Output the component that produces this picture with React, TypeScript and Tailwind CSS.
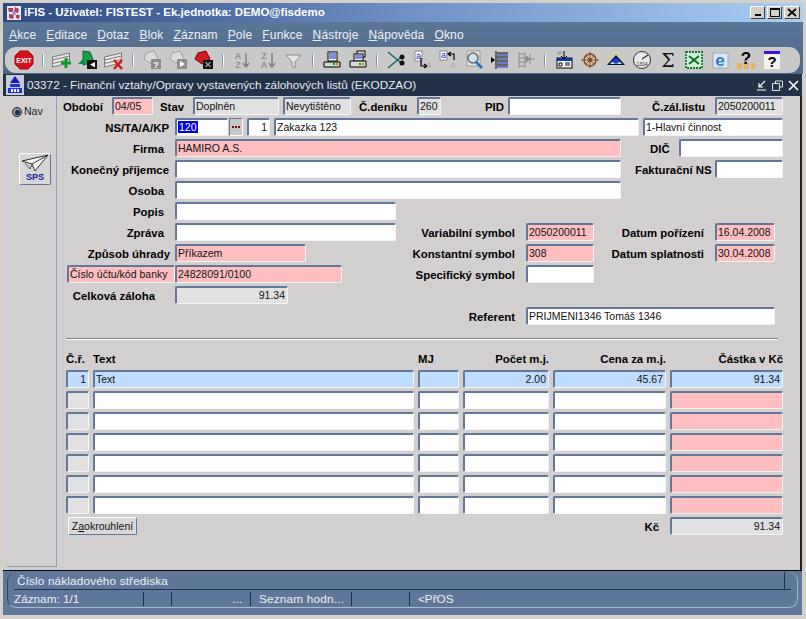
import type { ReactNode } from "react";

const TONES = {
  white: "bg-white",
  pink: "bg-[#ffbfc1]",
  gray: "bg-[#e2e1e2]",
  blue: "bg-[#bfdeff]",
};

type Tone = keyof typeof TONES;

function Field({ w, tone = "white", right, children }: { w: string; tone?: Tone; right?: boolean; children?: ReactNode }) {
  return (
    <div className={`${w} ${TONES[tone]} h-[18px] shrink-0 overflow-hidden whitespace-nowrap rounded-[2px] border-2 border-r border-b border-t-[#62789a] border-l-[#62789a] border-r-[#f4f4f4] border-b-[#f4f4f4] text-[10.5px] leading-[14px] text-[#111] ${right ? "pr-[2px] text-right" : "pl-[1px]"}`}>
      {children}
    </div>
  );
}

function Lbl({ w, right, children }: { w: string; right?: boolean; children: ReactNode }) {
  return (
    <div className={`${w} ${right ? "text-right" : ""} shrink-0 whitespace-nowrap text-[11.4px] leading-[20px] font-bold text-black`}>
      {children}
    </div>
  );
}

function Row({ children }: { children: ReactNode }) {
  return <div className="flex h-[18px] items-start">{children}</div>;
}

function Ico({ children }: { children: ReactNode }) {
  return (
    <div className="flex h-[24px] w-[26px] shrink-0 items-center justify-center">
      <svg viewBox="0 0 20 20" className="h-[20px] w-[20px]">{children}</svg>
    </div>
  );
}

const Sep = () => (
  <div className="flex h-[24px] w-[12px] shrink-0 items-center justify-center">
    <div className="h-[13px] w-[2px] bg-[#7f9ab8] border-r border-white" />
  </div>
);

const RecLines = ({ c = "#777" }: { c?: string }) => (
  <g stroke={c} fill="#e8e8e8">
    <path d="M0.500 7l17-4v10l-17 4z" />
    <path d="M0.500 10l17-4M0.500 13.500l17-4" fill="none" />
  </g>
);

const Doc = ({ c = "#a0a0a0" }: { c?: string }) => (
  <path d="M4 3l8-2 4 8-8 4-6-4z" fill="#dcdcdc" stroke={c} />
);

const MENU: [string, string][] = [
  ["A", "kce"], ["E", "ditace"], ["D", "otaz"], ["B", "lok"], ["Z", "áznam"],
  ["P", "ole"], ["F", "unkce"], ["N", "ástroje"], ["N", "ápověda"], ["O", "kno"],
];

const TABLE_ROWS = [0, 1, 2, 3, 4, 5];

export default function App() {
  return (
    <div className="relative flex h-[619px] w-[806px] flex-col overflow-hidden bg-[#d4d0c8] font-['Liberation_Sans',Arial,sans-serif]">
      {/* titulek aplikace */}
      <div className="mx-[3px] mt-[3px] flex h-[19px] shrink-0 items-center bg-linear-to-r from-[#2c4a82] via-[#6e90c4] to-[#a9cff4] pl-[3px] pr-[3px]">
        <svg viewBox="0 0 16 16" className="h-[16px] w-[16px] shrink-0">
          <rect x="1" y="1" width="14" height="14" fill="#f2e6ea" />
          <path d="M2 3h5v4H3zM9 2l4 2-1 4-4-1zM3 9l5 1-1 4-4-1zM10 10l4 0-1 4-3-1z" fill="#b23a5e" />
          <path d="M5 5l6 6M11 4l-6 7" stroke="#5a5fb0" />
        </svg>
        <span className="ml-[2px] text-[11.500px] leading-none font-bold whitespace-nowrap text-white">iFIS - Uživatel: FISTEST - Ek.jednotka: DEMO@fisdemo</span>
        <div className="ml-auto flex items-center">
          <div className="flex h-[13px] w-[15px] items-end justify-center border border-t-white border-l-white border-r-[#404040] border-b-[#404040] bg-[#d4d0c8] pb-[2px]">
            <div className="h-[2px] w-[6px] bg-black" />
          </div>
          <div className="ml-[2px] flex h-[13px] w-[15px] items-center justify-center border border-t-white border-l-white border-r-[#404040] border-b-[#404040] bg-[#d4d0c8]">
            <div className="h-[9px] w-[10px] border border-t-2 border-black" />
          </div>
          <div className="ml-[2px] flex h-[13px] w-[16px] items-center justify-center border border-t-white border-l-white border-r-[#404040] border-b-[#404040] bg-[#d4d0c8]">
            <svg viewBox="0 0 10 9" className="h-[9px] w-[10px]"><path d="M1 1l8 7M9 1l-8 7" stroke="#000" strokeWidth="1.700" /></svg>
          </div>
        </div>
      </div>

      {/* menu a nástrojová lišta */}
      <div className="mx-[3px] flex h-[52px] shrink-0 flex-col bg-linear-to-b from-[#5c7698] to-[#4f688a]">
        <div className="flex h-[25px] items-center gap-[10px] pl-[6px] text-[12px] tracking-[0.15px] text-[#eef2f7]">
          {MENU.map(([a, b], i) => (
            <span key={i}><span className="underline">{a}</span>{b}</span>
          ))}
        </div>
        <div className="ml-[2px] mr-[3px] flex h-[26px] items-center rounded-[11px] bg-[#c9c9ca] pl-[6px]">
          <Ico>
            <path d="M6 1h8l5 5v8l-5 5H6l-5-5V6z" fill="#d8101c" stroke="#900" />
            <text x="10" y="13" textAnchor="middle" fontSize="7" fontWeight="700" fill="#fff">EXIT</text>
          </Ico>
          <Sep />
          <Ico><RecLines /><path d="M14 8v10M9 13h10" stroke="#0a9a2a" strokeWidth="2.800" /></Ico>
          <Ico>
            <path d="M5 1l7 1 4 10-11 3z" fill="#15a040" stroke="#064" />
            <path d="M0 14l6-6v6z" fill="#085" />
            <rect x="9" y="10" width="10" height="9" fill="#111" /><path d="M17 12l-5 2.500 5 3z" fill="#fff" />
          </Ico>
          <Ico><RecLines /><path d="M10 10l8 9M18 10l-8 9" stroke="#d81818" strokeWidth="2.400" /></Ico>
          <Sep />
          <Ico><Doc /><rect x="9" y="9" width="10" height="10" fill="#8c8c8c" /><text x="14" y="18" textAnchor="middle" fontSize="9" fontWeight="700" fill="#fff">?</text></Ico>
          <Ico><Doc /><rect x="9" y="9" width="10" height="10" fill="#8c8c8c" /><path d="M12 11l5 3-5 3z" fill="#fff" /></Ico>
          <Ico>
            <path d="M4 3l8-2 4 8-8 5-7-5z" fill="#d81820" stroke="#700" />
            <rect x="9" y="10" width="10" height="9" fill="#111" /><path d="M11.500 12l5 5M16.500 12l-5 5" stroke="#fff" />
          </Ico>
          <Sep />
          <Ico>
            <text x="6" y="9" textAnchor="middle" fontSize="9" fontWeight="700" fill="#909090">A</text>
            <text x="6" y="18" textAnchor="middle" fontSize="9" fontWeight="700" fill="#909090">Z</text>
            <path d="M14 3v13M11 13l3 4 3-4" stroke="#808080" strokeWidth="1.500" fill="none" />
          </Ico>
          <Ico>
            <text x="6" y="9" textAnchor="middle" fontSize="9" fontWeight="700" fill="#909090">Z</text>
            <text x="6" y="18" textAnchor="middle" fontSize="9" fontWeight="700" fill="#909090">A</text>
            <path d="M14 3v13M11 13l3 4 3-4" stroke="#808080" strokeWidth="1.500" fill="none" />
          </Ico>
          <Ico><path d="M2 5h15l-6 7v6l-3-2v-4z" fill="#e6e6e6" stroke="#8a8a8a" /></Ico>
          <Sep />
          <Ico>
            <rect x="6" y="2" width="9" height="9" fill="#fff" stroke="#000" />
            <path d="M7 4h7M7 6h7M7 8h7" stroke="#0018c0" />
            <path d="M2 12h16v5H2z" fill="#d8d8d8" stroke="#000" />
            <path d="M11 14h2" stroke="#0a0" strokeWidth="2" /><path d="M14 14h2" stroke="#d80" strokeWidth="2" />
          </Ico>
          <Ico>
            <rect x="9" y="1" width="8" height="6" fill="#ddd" stroke="#000" />
            <rect x="6" y="4" width="9" height="7" fill="#fff" stroke="#000" />
            <path d="M7 6h7M7 8h7" stroke="#0018c0" />
            <path d="M2 11h16v6H2z" fill="#d8d8d8" stroke="#000" />
            <path d="M11 14h2" stroke="#0a0" strokeWidth="2" /><path d="M14 14h2" stroke="#d80" strokeWidth="2" />
          </Ico>
          <Sep />
          <Ico>
            <path d="M2 2l12 10M2 18l12-10" stroke="#1c6a70" strokeWidth="1.600" fill="none" />
            <circle cx="16" cy="13" r="2.500" fill="#111" /><circle cx="16" cy="7" r="2.500" fill="#111" />
          </Ico>
          <Ico>
            <path d="M3 1h7v10H3z" fill="#fff" stroke="#888" />
            <text x="6.500" y="9" textAnchor="middle" fontSize="9" fill="#1020d0">a</text>
            <path d="M9 8v8h5M12 14l3 2-3 2" stroke="#000" strokeWidth="1.200" fill="none" />
            <text x="17" y="18" textAnchor="middle" fontSize="9" fill="#aaa">a</text>
          </Ico>
          <Ico>
            <path d="M2 1h7v9H2z" fill="#fff" stroke="#888" />
            <text x="5.500" y="8" textAnchor="middle" fontSize="9" fill="#1020d0">a</text>
            <path d="M16 10V4h-5M13 2l-3 2 3 2" stroke="#000" strokeWidth="1.200" fill="none" />
            <text x="15" y="18" textAnchor="middle" fontSize="9" fill="#aaa">a</text>
          </Ico>
          <Ico>
            <path d="M3 1h13v15H3z" fill="#e6e6e6" stroke="#999" />
            <circle cx="9" cy="8" r="5" fill="#cfe4ea" stroke="#666" strokeWidth="1.500" />
            <path d="M12 12l6 6" stroke="#2070c8" strokeWidth="2.500" />
          </Ico>
          <Ico>
            <path d="M6 1v18" stroke="#000" />
            <path d="M7 3h11M7 7h11M7 11h11M7 15h11" stroke="#000" />
            <path d="M7 5h11M7 9h11M7 13h11M7 17h11" stroke="#0a30d0" />
            <path d="M1 7l4 3-4 3z" fill="#000" />
          </Ico>
          <Ico>
            <path d="M3 2v16M9 2v16" stroke="#8c8c8c" />
            <path d="M3 4h6M3 8h6M3 12h6M3 16h6" stroke="#8c8c8c" />
            <path d="M10 6l4 3-4 3zM14 9h5M14 4v10" fill="#8c8c8c" stroke="#8c8c8c" />
          </Ico>
          <Sep />
          <Ico>
            <rect x="3" y="8" width="15" height="10" fill="#fff" stroke="#000" />
            <rect x="3" y="8" width="15" height="3" fill="#0a3ab0" />
            <path d="M5 13h3v3H5zM11 13h5M11 15h5" stroke="#000" fill="none" />
            <path d="M10 1v7M7 6l3 3 3-3" stroke="#000" fill="none" />
            <path d="M3 2h5M3 4h4" stroke="#888" />
          </Ico>
          <Ico>
            <circle cx="10" cy="10" r="6" fill="none" stroke="#8a4a10" strokeWidth="1.500" />
            <circle cx="10" cy="10" r="2" fill="#8a4a10" />
            <path d="M1 10h18M10 2v16M5 5l10 10M15 5L5 15" stroke="#8a4a10" />
          </Ico>
          <Ico>
            <path d="M10 5l9 10H1z" fill="#0a1a30" />
            <path d="M1 4l3 3M19 4l-3 3M10 1v3" stroke="#e8e020" />
            <path d="M4 14a7 6 0 0 1 12 0z" fill="#c8d8e8" />
            <circle cx="10" cy="11" r="2.800" fill="#1040e0" />
          </Ico>
          <Ico>
            <circle cx="10" cy="10" r="8.500" fill="#e8e8e8" stroke="#333" />
            <path d="M10 9l6-4" stroke="#333" strokeWidth="1.200" />
            <text x="10" y="16" textAnchor="middle" fontSize="5" fill="#222">1314</text>
          </Ico>
          <Ico><text x="10" y="17" textAnchor="middle" fontSize="19" fontFamily="'DejaVu Serif',serif" fill="#111">Σ</text></Ico>
          <Ico>
            <rect x="2" y="2" width="16" height="16" fill="#d8ecd8" stroke="#0a7a30" strokeWidth="1.800" strokeDasharray="2 1" />
            <path d="M5 6l10 8M15 6L5 14" stroke="#0a7a30" strokeWidth="2.200" />
          </Ico>
          <Ico>
            <rect x="3" y="3" width="15" height="15" fill="#dfe8f2" stroke="#a0aab8" />
            <text x="10" y="16" textAnchor="middle" fontSize="17" fontWeight="700" fill="#2a7ac8">e</text>
          </Ico>
          <Ico>
            <rect x="1" y="13" width="5" height="6" fill="#e8b060" /><rect x="8" y="13" width="5" height="6" fill="#e8b060" /><rect x="15" y="13" width="4" height="6" fill="#e8b060" />
            <text x="10" y="14" textAnchor="middle" fontSize="17" fontWeight="700" fill="#000">?</text>
          </Ico>
          <Ico>
            <rect x="2" y="1" width="16" height="4" fill="#4010d0" />
            <rect x="2" y="4" width="16" height="15" fill="#f2f2f2" />
            <text x="10" y="17" textAnchor="middle" fontSize="15" fontWeight="700" fill="#000">?</text>
          </Ico>
        </div>
      </div>

      {/* titulek formuláře */}
      <div className="mx-[3px] mr-[4px] flex h-[22px] shrink-0 items-center bg-[#223249] pl-[3px] pr-[3px]">
        <svg viewBox="0 0 18 20" className="h-[20px] w-[18px] shrink-0">
          <rect width="18" height="20" fill="#c8ccd4" />
          <path d="M9 1l5 7H4z" fill="#1018d0" />
          <path d="M4 9h10v3H4zM2 13h14v5H2z" fill="#2030e0" />
          <path d="M5 14h2v3H5zM8 14h2v3H8zM11 14h2v3h-2z" fill="#fff" />
        </svg>
        <span className="ml-[3px] text-[11.750px] whitespace-nowrap text-[#e6ebf2]">03372 - Finanční vztahy/Opravy vystavených zálohových listů (EKODZAO)</span>
        <div className="ml-auto flex items-center gap-[5px]">
          <svg viewBox="0 0 11 11" className="h-[11px] w-[11px]"><path d="M9 1L3 7M3 3v4h4M1 10h9" stroke="#fff" strokeWidth="1.200" fill="none" /></svg>
          <svg viewBox="0 0 11 11" className="h-[11px] w-[11px]"><path d="M3.500 3V1h7v6H8M0.500 3.500h7v7h-7z" stroke="#dfe4ea" fill="none" /></svg>
          <svg viewBox="0 0 11 11" className="h-[11px] w-[11px]"><path d="M1 1l9 9M10 1l-9 9" stroke="#fff" strokeWidth="1.600" /></svg>
        </div>
      </div>

      {/* tělo formuláře */}
      <div className="ml-[3px] mr-[4px] flex h-[474px] shrink-0 border-r-2 border-r-[#222] bg-[#d0d0d0] bg-[radial-gradient(#e2c8c8_0.6px,transparent_0.8px)] bg-[length:4px_4px]">
        <div className="ml-[4px] mb-[3px] w-[50px] shrink-0 border-r border-b border-r-[#8ea2bd] border-b-[#8ea2bd]">
          <div className="mt-[8px] flex h-[16px] items-center pl-[5px]">
            <div className="flex h-[10px] w-[10px] items-center justify-center rounded-full border border-[#222] bg-[#8f9aa8]">
              <div className="h-[5px] w-[5px] rounded-full bg-[#1c2c44]" />
            </div>
            <span className="ml-[2px] text-[10.500px] text-[#222]">Nav</span>
          </div>
          <div className="mt-[33px] ml-[12px] flex h-[32px] w-[32px] flex-col items-center rounded-[2px] border border-t-white border-l-white border-r-[#62789a] border-b-[#62789a] bg-[#d6d6d6]">
            <svg viewBox="0 0 28 18" className="h-[18px] w-[28px]">
              <path d="M1 7l26-6-13 16-3-7z" fill="#f4f4f4" stroke="#333" />
              <path d="M11 10L27 1" stroke="#333" />
              <path d="M4 9l5 6M9 15l2-5" stroke="#555" />
            </svg>
            <span className="text-[9px] leading-[10px] font-bold text-[#10209a]">SPS</span>
          </div>
        </div>

        <div className="flex-1 pt-[1px]">
          <div className="flex flex-col gap-[3px]">
            <Row>
              <div className="ml-[6px]"><Lbl w="w-[49px]">Období</Lbl></div>
              <Field w="w-[41px]" tone="pink">04/05</Field>
              <div className="ml-[7px]"><Lbl w="w-[33px]">Stav</Lbl></div>
              <Field w="w-[86px]" tone="gray">Doplněn</Field>
              <div className="ml-[4px]"><Field w="w-[68px]" tone="gray">Nevytištěno</Field></div>
              <div className="ml-[8px]"><Lbl w="w-[58px]">Č.deníku</Lbl></div>
              <Field w="w-[24px]" tone="gray">260</Field>
              <div className="ml-[44px]"><Lbl w="w-[23px]">PID</Lbl></div>
              <Field w="w-[113px]" />
              <div className="ml-[31px]"><Lbl w="w-[63px]">Č.zál.listu</Lbl></div>
              <Field w="w-[68px]" tone="gray">2050200011</Field>
            </Row>
            <Row>
              <div className="w-[118px] pr-[6px]"><Lbl w="w-full" right>NS/TA/A/KP</Lbl></div>
              <Field w="w-[53px]"><span className="bg-[#0000e6] px-[1px] text-white">120</span></Field>
              <div className="ml-[1px] flex h-[18px] w-[14px] shrink-0 items-center justify-center gap-[1px] border border-t-[#62789a] border-l-[#62789a] border-r-white border-b-white bg-[#c8c8c8]">
                <div className="h-[2px] w-[2px] bg-[#701010]" /><div className="h-[2px] w-[2px] bg-[#701010]" /><div className="h-[2px] w-[2px] bg-[#701010]" />
              </div>
              <div className="ml-[4px]"><Field w="w-[23px]" right>1</Field></div>
              <div className="ml-[4px]"><Field w="w-[365px]">Zakazka 123</Field></div>
              <div className="ml-[4px]"><Field w="w-[140px]">1-Hlavní činnost</Field></div>
            </Row>
            <Row>
              <div className="w-[118px] pr-[11px]"><Lbl w="w-full" right>Firma</Lbl></div>
              <Field w="w-[446px]" tone="pink">HAMIRO A.S.</Field>
              <div className="ml-[29px]"><Lbl w="w-[29px]">DIČ</Lbl></div>
              <Field w="w-[104px]" />
            </Row>
            <Row>
              <div className="w-[118px] pr-[6px]"><Lbl w="w-full" right>Konečný příjemce</Lbl></div>
              <Field w="w-[446px]" />
              <div className="ml-[14px]"><Lbl w="w-[80px]">Fakturační NS</Lbl></div>
              <Field w="w-[68px]" />
            </Row>
            <Row>
              <div className="w-[118px] pr-[11px]"><Lbl w="w-full" right>Osoba</Lbl></div>
              <Field w="w-[446px]" />
            </Row>
            <Row>
              <div className="w-[118px] pr-[11px]"><Lbl w="w-full" right>Popis</Lbl></div>
              <Field w="w-[221px]" />
            </Row>
            <Row>
              <div className="w-[118px] pr-[11px]"><Lbl w="w-full" right>Zpráva</Lbl></div>
              <Field w="w-[221px]" />
              <div className="w-[130px] pr-[11px]"><Lbl w="w-full" right>Variabilní symbol</Lbl></div>
              <Field w="w-[68px]" tone="pink">2050200011</Field>
              <div className="w-[121px] pr-[11px]"><Lbl w="w-full" right>Datum pořízení</Lbl></div>
              <Field w="w-[60px]" tone="pink">16.04.2008</Field>
            </Row>
            <Row>
              <div className="w-[118px] pr-[5px]"><Lbl w="w-full" right>Způsob úhrady</Lbl></div>
              <Field w="w-[131px]" tone="pink">Příkazem</Field>
              <div className="w-[220px] pr-[11px]"><Lbl w="w-full" right>Konstantní symbol</Lbl></div>
              <Field w="w-[68px]" tone="pink">308</Field>
              <div className="w-[121px] pr-[11px]"><Lbl w="w-full" right>Datum splatnosti</Lbl></div>
              <Field w="w-[60px]" tone="pink">30.04.2008</Field>
            </Row>
            <Row>
              <div className="ml-[10px]"><Field w="w-[108px]" tone="pink">Číslo účtu/kód banky</Field></div>
              <Field w="w-[167px]" tone="pink">24828091/0100</Field>
              <div className="w-[184px] pr-[11px]"><Lbl w="w-full" right>Specifický symbol</Lbl></div>
              <Field w="w-[68px]" />
            </Row>
            <Row>
              <div className="w-[118px] pr-[20px]"><Lbl w="w-full" right>Celková záloha</Lbl></div>
              <Field w="w-[113px]" tone="gray" right>91.34</Field>
            </Row>
            <Row>
              <div className="w-[469px] pr-[11px]"><Lbl w="w-full" right>Referent</Lbl></div>
              <Field w="w-[249px]">PRIJMENI1346 Tomáš 1346</Field>
            </Row>
          </div>

          <div className="mt-[13px] ml-[9px] h-[2px] w-[712px] border-t border-b border-t-[#808080] border-b-white" />

          <div className="mt-[12px] ml-[9px] grid grid-cols-[23px_321px_41px_86px_113px_113px] gap-x-[4px] gap-y-[3px]">
            <Lbl w="h-[18px] -mt-[3px]">Č.ř.</Lbl>
            <Lbl w="h-[18px] -mt-[3px]">Text</Lbl>
            <Lbl w="h-[18px] -mt-[3px]">MJ</Lbl>
            <Lbl w="h-[18px] -mt-[3px]" right>Počet m.j.</Lbl>
            <Lbl w="h-[18px] -mt-[3px]" right>Cena za m.j.</Lbl>
            <Lbl w="h-[18px] -mt-[3px]" right>Částka v Kč</Lbl>

            <Field w="w-full" tone="blue" right>1</Field>
            <Field w="w-full" tone="blue">Text</Field>
            <Field w="w-full" tone="blue" />
            <Field w="w-full" tone="blue" right>2.00</Field>
            <Field w="w-full" tone="blue" right>45.67</Field>
            <Field w="w-full" tone="blue" right>91.34</Field>

            {TABLE_ROWS.map((r) => [
              <Field key={`${r}a`} w="w-full" tone="gray" />,
              <Field key={`${r}b`} w="w-full" />,
              <Field key={`${r}c`} w="w-full" />,
              <Field key={`${r}d`} w="w-full" />,
              <Field key={`${r}e`} w="w-full" />,
              <Field key={`${r}f`} w="w-full" tone="pink" />,
            ])}
          </div>

          <div className="mt-[3px] flex h-[18px] items-start">
            <button className="ml-[11px] h-[18px] w-[69px] shrink-0 rounded-[2px] border border-t-white border-l-white border-r-[#62789a] border-b-[#62789a] bg-[#d8d8d8] text-[10.500px] leading-[15px] whitespace-nowrap text-[#111]">
              Z<span className="underline">a</span>okrouhlení
            </button>
            <div className="w-[533px] pr-[11px]"><Lbl w="w-full" right>Kč</Lbl></div>
            <Field w="w-[113px]" tone="gray" right>91.34</Field>
          </div>
        </div>
      </div>

      {/* stavový řádek */}
      <div className="ml-[3px] mr-[4px] h-[45px] shrink-0 border-t border-t-black bg-[#5f7899] px-[4px] pt-[1px]">
        <div className="h-[36px] rounded-[9px] border-l border-r border-b border-l-[#33465f] border-r-[#a9b8cb] border-b-[#a9b8cb] pl-[6px] pr-[6px] text-[11.750px] text-[#edf1f6]">
          <div className="flex h-[18px] items-center border-b border-b-[#22324a]">
            <span className="ml-[3px] tracking-[0.15px] whitespace-nowrap">Číslo nákladového střediska</span>
            <div className="mr-[6px] ml-auto h-[17px] border-r border-r-[#22324a]" />
          </div>
          <div className="flex h-[17px] items-center">
            <div className="h-[14px] w-[130px] shrink-0 border-r border-r-[#22324a] leading-[14px]">Záznam: 1/1</div>
            <div className="h-[14px] w-[28px] shrink-0 border-r border-r-[#22324a]" />
            <div className="h-[14px] w-[79px] shrink-0 border-r border-r-[#22324a] pr-[8px] text-right leading-[14px]">...</div>
            <div className="h-[14px] w-[101px] shrink-0 border-r border-r-[#22324a] pl-[8px] leading-[14px] tracking-[0.2px] whitespace-nowrap">Seznam hodn...</div>
            <div className="h-[14px] w-[58px] shrink-0 border-r border-r-[#22324a]" />
            <div className="pl-[8px] leading-[14px]">&lt;PřOS</div>
          </div>
        </div>
      </div>
    </div>
  );
}
